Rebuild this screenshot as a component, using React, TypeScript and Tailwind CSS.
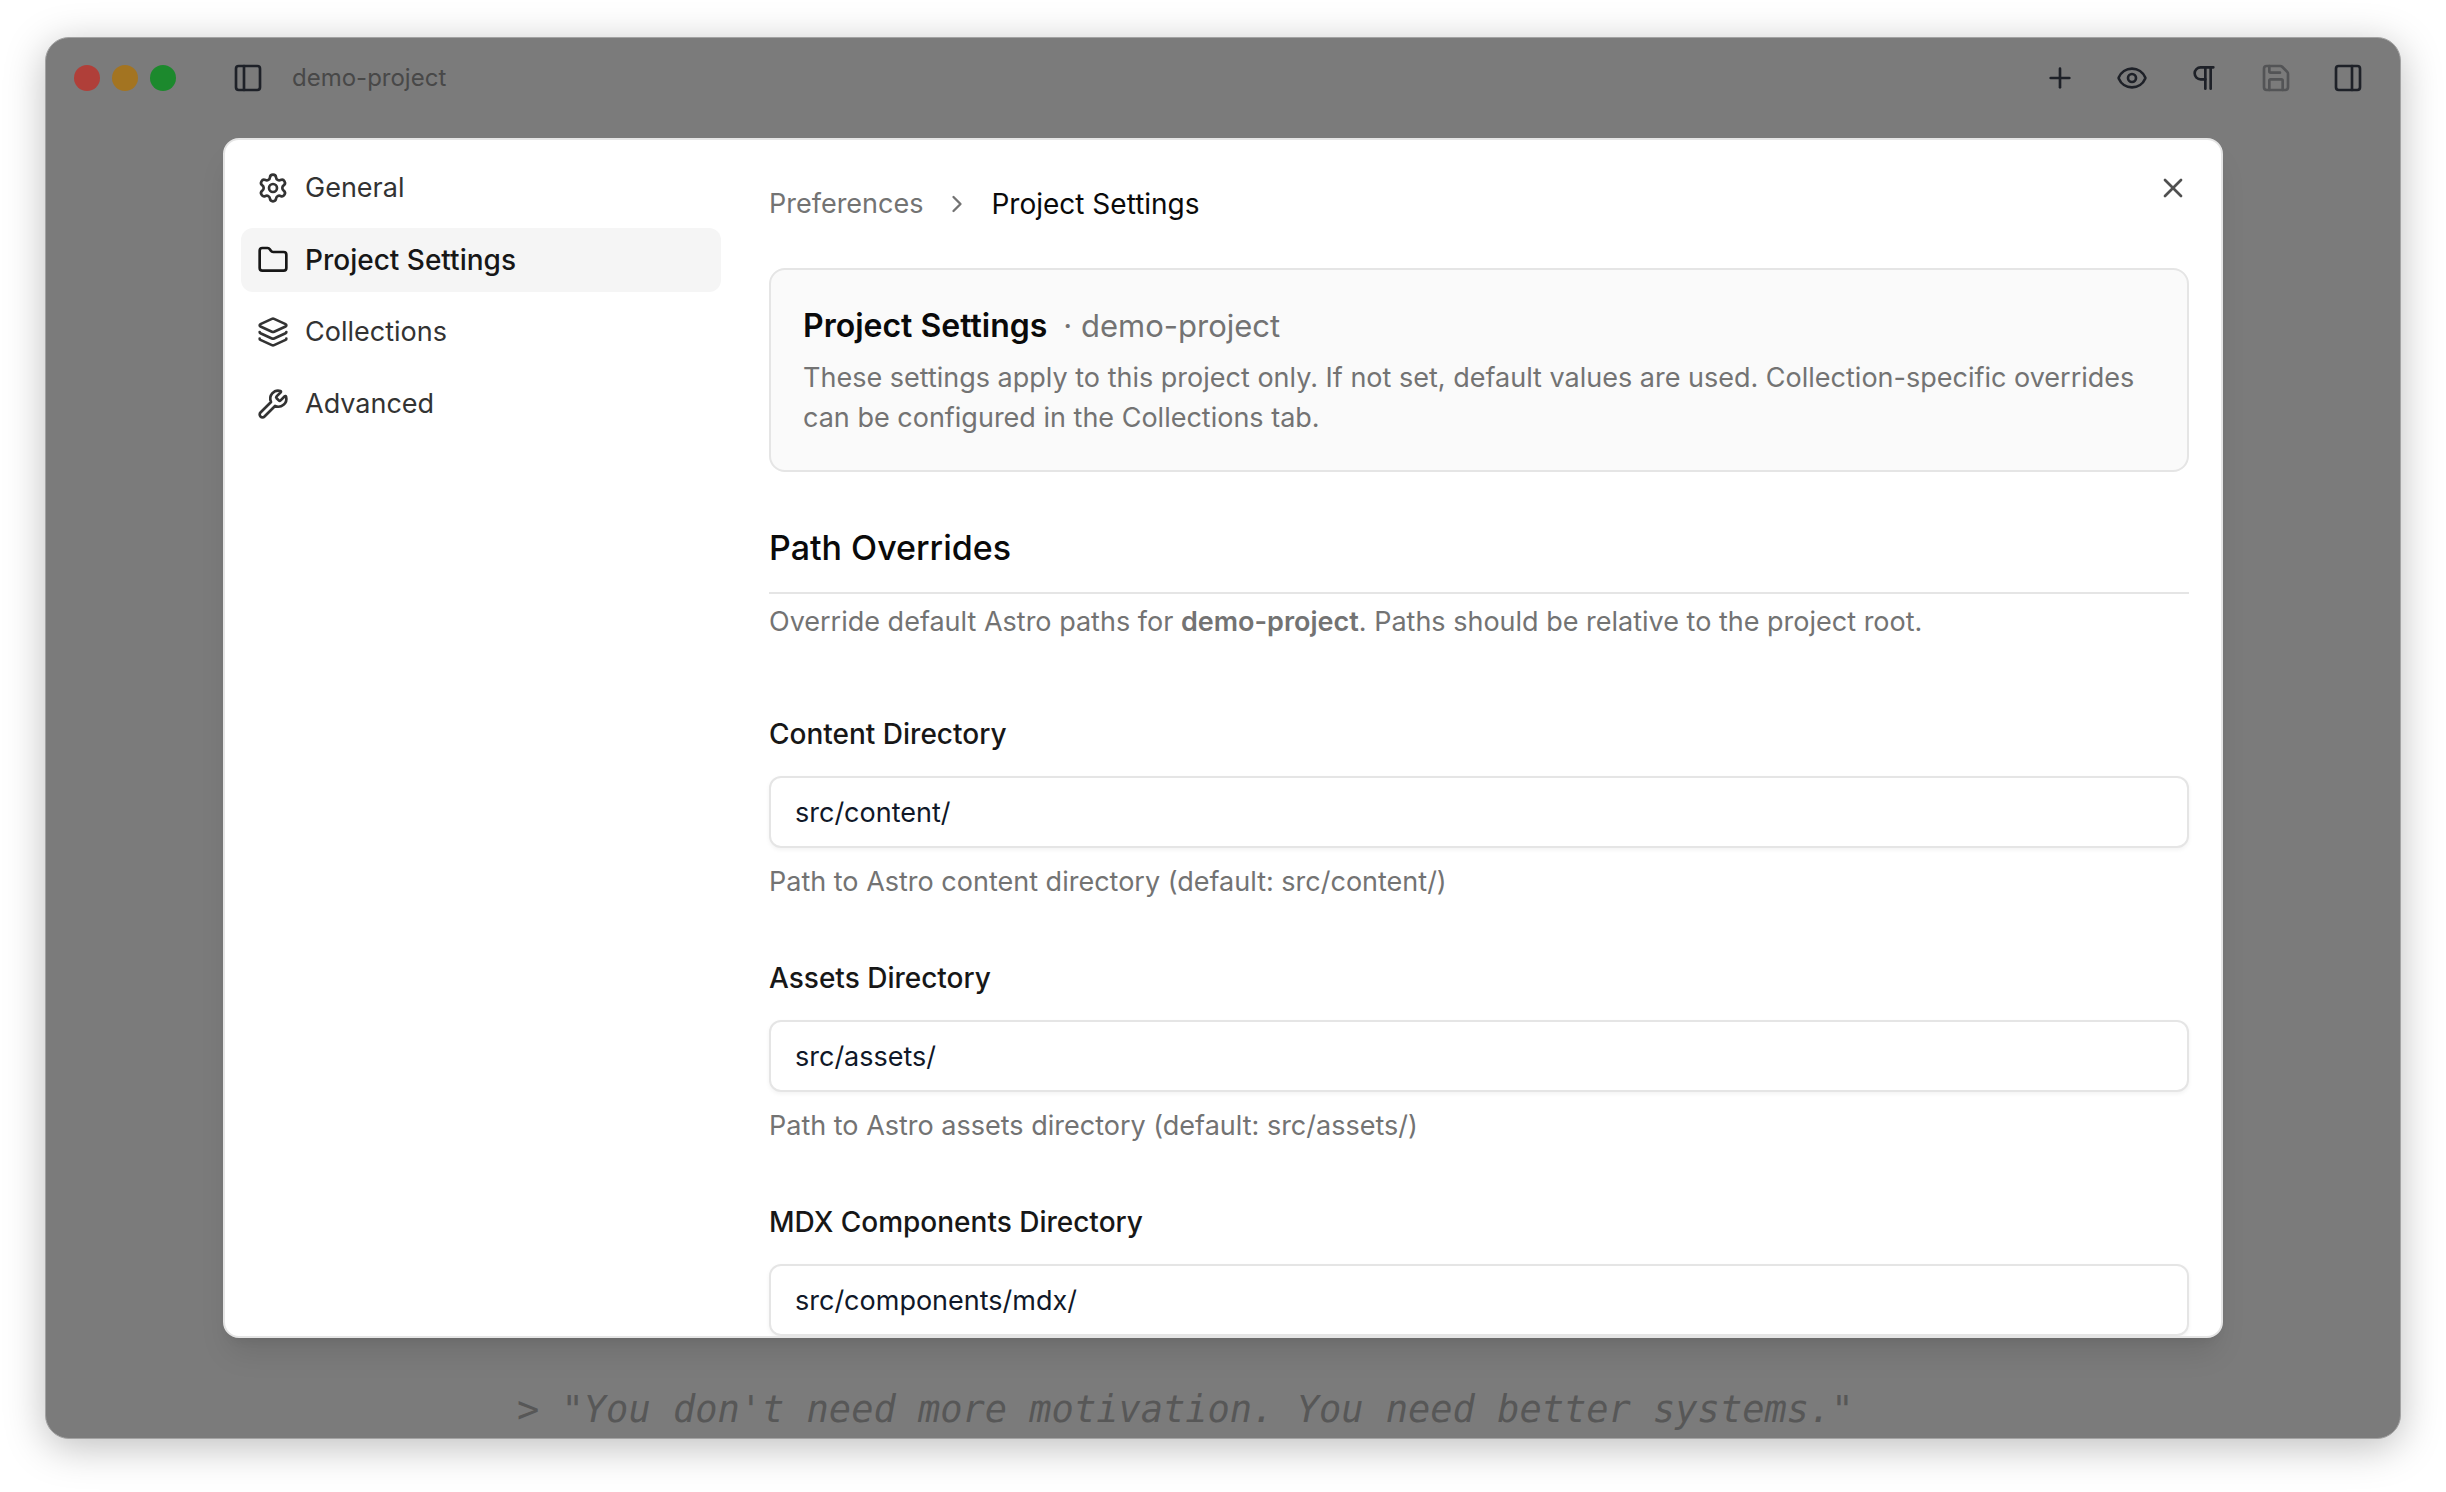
import {
  ChevronRight,
  Eye,
  Folder,
  Layers,
  PanelLeft,
  PanelRight,
  Pilcrow,
  Plus,
  Save,
  Settings,
  Wrench,
  X,
} from "lucide-react";
import type { LucideIcon } from "lucide-react";

type NavItem = { label: string; icon: LucideIcon; active?: boolean };

const navItems: NavItem[] = [
  { label: "General", icon: Settings },
  { label: "Project Settings", icon: Folder, active: true },
  { label: "Collections", icon: Layers },
  { label: "Advanced", icon: Wrench },
];

const toolbarItems = [
  { label: "New file", icon: Plus },
  { label: "Focus mode", icon: Eye },
  { label: "Highlights", icon: Pilcrow },
  { label: "Save", icon: Save, disabled: true },
  { label: "Toggle frontmatter", icon: PanelRight },
];

const pathFields = [
  {
    id: "content-directory",
    label: "Content Directory",
    value: "src/content/",
    hint: "Path to Astro content directory (default: src/content/)",
  },
  {
    id: "assets-directory",
    label: "Assets Directory",
    value: "src/assets/",
    hint: "Path to Astro assets directory (default: src/assets/)",
  },
  {
    id: "mdx-directory",
    label: "MDX Components Directory",
    value: "src/components/mdx/",
  },
];

const TitleBar: React.FC = () => (
  <header className="flex h-20 shrink-0 items-center pl-7 pr-6 text-[#1e2128]">
    {/* Traffic lights */}
    <div className="flex gap-3">
      <span className="size-[26px] rounded-full bg-[#b03f39]" />
      <span className="size-[26px] rounded-full bg-[#a37421]" />
      <span className="size-[26px] rounded-full bg-[#1c892d]" />
    </div>
    <button
      aria-label="Toggle sidebar"
      className="ml-11 flex size-14 items-center justify-center"
    >
      <PanelLeft className="size-8" />
    </button>
    <span className="ml-4 text-2xl text-[#484848]">demo-project</span>
    <div className="ml-auto flex gap-4">
      {toolbarItems.map(({ label, icon: Icon, disabled }) => (
        <button
          key={label}
          aria-label={label}
          disabled={disabled}
          className="flex size-14 items-center justify-center disabled:text-[#535456]"
        >
          <Icon className="size-8" />
        </button>
      ))}
    </div>
  </header>
);

const Sidebar: React.FC = () => (
  <nav className="flex w-[512px] shrink-0 flex-col gap-2 p-4">
    {navItems.map(({ label, icon: Icon, active }) => (
      <button
        key={label}
        className={
          active
            ? "flex h-16 items-center gap-4 rounded-xl bg-[#f5f5f5] px-4 text-left text-[28px] font-medium text-[#171717]"
            : "flex h-16 items-center gap-4 rounded-xl px-4 text-left text-[#333333]"
        }
      >
        <Icon className="size-8" />
        {label}
      </button>
    ))}
  </nav>
);

const PathOverrides: React.FC = () => (
  <section className="mt-12">
    <h3 className="border-b-2 border-[#e5e5e5] pb-4 text-[34px] leading-[56px] font-medium text-[#0a0a0a]">
      Path Overrides
    </h3>
    <p className="mt-1.5 leading-11 text-[#737373]">
      Override default Astro paths for{" "}
      <strong className="font-semibold">demo-project</strong>. Paths should be
      relative to the project root.
    </p>

    <div className="mt-18 flex flex-col gap-14">
      {pathFields.map((field) => (
        <div key={field.id} className="flex flex-col">
          <label
            htmlFor={field.id}
            className="text-[28px] leading-9 font-medium text-[#171717]"
          >
            {field.label}
          </label>
          <input
            id={field.id}
            type="text"
            defaultValue={field.value}
            className="mt-6 h-18 w-full rounded-xl border-2 border-[#e5e5e5] bg-white px-6 text-[#101828] shadow-[0_2px_4px_rgba(0,0,0,0.05)] outline-none"
          />
          {field.hint && (
            <p className="mt-3 leading-11 text-[#737373]">{field.hint}</p>
          )}
        </div>
      ))}
    </div>
  </section>
);

const PreferencesDialog: React.FC = () => (
  <div
    role="dialog"
    aria-label="Preferences"
    className="relative flex h-[1200px] max-h-full w-full max-w-[2000px] overflow-hidden rounded-2xl border-2 border-[#e5e5e5] bg-white text-[27px] shadow-[0_20px_30px_-6px_rgba(0,0,0,0.1),0_8px_12px_-8px_rgba(0,0,0,0.1)]"
  >
    <Sidebar />
    <main className="flex min-w-0 flex-1 flex-col overflow-hidden px-8">
      <nav
        aria-label="Breadcrumb"
        className="flex h-32 shrink-0 items-center gap-5"
      >
        <a href="#" className="text-[#737373]">
          Preferences
        </a>
        <ChevronRight className="size-7 text-[#737373]" />
        <span className="text-[28px] text-[#0a0a0a]">Project Settings</span>
      </nav>

      <div className="rounded-2xl border-2 border-[#e5e5e5] bg-[#fafafa] p-8">
        <h2 className="text-[32px] leading-12 font-semibold text-[#0a0a0a]">
          Project Settings
          <span className="ml-4 text-[31px] font-normal text-[#737373]">
            · demo-project
          </span>
        </h2>
        <p className="mt-2 leading-10 text-[#737373]">
          These settings apply to this project only. If not set, default values
          are used. Collection-specific overrides can be configured in the
          Collections tab.
        </p>
      </div>

      <PathOverrides />
    </main>
    <button aria-label="Close" className="absolute top-8 right-8 text-[#505050]">
      <X className="size-8" />
    </button>
  </div>
);

export default function App() {
  return (
    <div className="flex h-screen bg-white px-[45px] pt-[37px] pb-[53px] font-['Inter',sans-serif]">
      <div className="relative flex flex-1 flex-col overflow-hidden rounded-3xl border border-[#a3a3a3] bg-[#7b7b7b] shadow-[0_8px_40px_rgba(0,0,0,0.26)]">
        <TitleBar />
        {/* Editor behind the dialog */}
        <div className="mx-auto flex w-full max-w-[1412px] flex-1 items-end">
          <p className="font-['DejaVu_Sans_Mono',monospace] text-[37px] leading-14 text-[#575757] italic">
            &gt; "You don't need more motivation. You need better systems."
          </p>
        </div>

        <div className="absolute inset-0 flex items-center justify-center">
          <PreferencesDialog />
        </div>
      </div>
    </div>
  );
}
